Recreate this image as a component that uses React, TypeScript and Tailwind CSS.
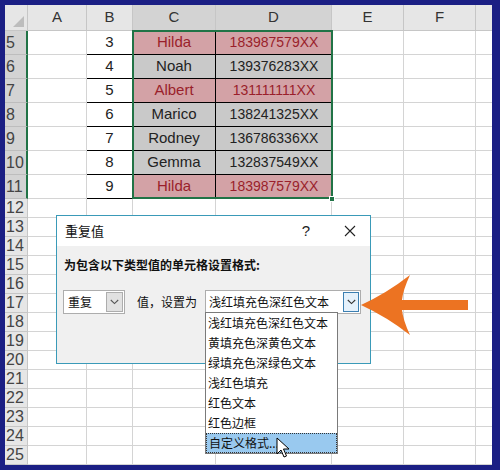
import React from "react";

const cols = [
  { key: "A", cls: "w-[59px]", sel: false },
  { key: "B", cls: "w-[46px]", sel: false },
  { key: "C", cls: "w-[83px]", sel: true },
  { key: "D", cls: "w-[116px]", sel: true },
  { key: "E", cls: "w-[72px]", sel: false },
  { key: "F", cls: "w-[72px]", sel: false },
];

const data = [
  { n: 5, b: "3", c: "Hilda", d: "183987579XX", red: true },
  { n: 6, b: "4", c: "Noah", d: "139376283XX", red: false },
  { n: 7, b: "5", c: "Albert", d: "131111111XX", red: true },
  { n: 8, b: "6", c: "Marico", d: "138241325XX", red: false },
  { n: 9, b: "7", c: "Rodney", d: "136786336XX", red: false },
  { n: 10, b: "8", c: "Gemma", d: "132837549XX", red: false },
  { n: 11, b: "9", c: "Hilda", d: "183987579XX", red: true },
];

const emptyRows = [12, 13, 14, 15, 16, 17, 18, 19, 20, 21, 22, 23, 24, 25];

const menuItems = [
  "浅红填充色深红色文本",
  "黄填充色深黄色文本",
  "绿填充色深绿色文本",
  "浅红色填充",
  "红色文本",
  "红色边框",
  "自定义格式...",
];

const cellFont = { fontFamily: '"Liberation Sans", "Noto Sans CJK SC", sans-serif' };
const cjk = { fontFamily: '"Noto Sans CJK SC", "Liberation Sans", sans-serif' };

function Chevron({ color = "#555" }: { color?: string }) {
  return (
    <svg width="9" height="6" viewBox="0 0 9 6">
      <path d="M0.8 1 L4.5 4.6 L8.2 1" fill="none" stroke={color} strokeWidth="1.1" />
    </svg>
  );
}

export default function App() {
  return (
    <div className="w-[500px] h-[470px] bg-[#1b1f84] pt-[5px] pl-[5px] pr-[8px] pb-[5px] overflow-hidden" style={cellFont}>
      <div className="relative w-[487px] h-[460px] bg-white overflow-hidden">
        {/* header row */}
        <div className="flex h-[26px]">
          <div className="relative w-[23px] h-full bg-[#e6e6e6] border-r border-b border-[#c6c6c6]">
            <svg className="absolute right-[3px] bottom-[3px]" width="11" height="11" viewBox="0 0 11 11">
              <path d="M11 0 L11 11 L0 11 Z" fill="#bdbdbd" />
            </svg>
          </div>
          {cols.map((c) => (
            <div
              key={c.key}
              className={`${c.cls} h-full flex items-center justify-center border-r border-b border-[#c6c6c6] text-[15px] text-[#333] ${c.sel ? "bg-[#d3d3d3]" : "bg-[#e6e6e6]"}`}
            >
              {c.key}
            </div>
          ))}
          <div className="flex-1 h-full bg-[#e6e6e6] border-b border-[#c6c6c6]" />
        </div>

        {/* data rows */}
        {data.map((r) => (
          <div key={r.n} className="flex h-[24px]">
            <div className="w-[23px] h-full bg-[#d3d3d3] border-r-2 border-r-[#217346] border-b border-b-[#bdbdbd] flex items-center pl-[1px] text-[16px] text-[#444]">
              {r.n}
            </div>
            <div className="w-[59px] h-full border-r border-b border-[#d4d4d4]" />
            <div className="w-[46px] h-full border-r border-b border-black flex items-center justify-center text-[15px] text-[#222]">
              {r.b}
            </div>
            <div
              className={`w-[83px] h-full border-r border-b border-black flex items-center justify-center text-[15px] ${r.red ? "bg-[#d3a2a6] text-[#9a1f2b]" : "bg-[#c9c9c9] text-[#222]"}`}
            >
              {r.c}
            </div>
            <div
              className={`w-[116px] h-full border-b border-black flex items-center justify-center text-[14px] ${r.red ? "bg-[#d3a2a6] text-[#9a1f2b]" : "bg-[#c9c9c9] text-[#222]"}`}
            >
              {r.d}
            </div>
            <div className="w-[72px] h-full border-r border-b border-[#d4d4d4]" />
            <div className="w-[72px] h-full border-r border-b border-[#d4d4d4]" />
            <div className="flex-1 h-full border-b border-[#d4d4d4]" />
          </div>
        ))}

        {/* empty rows */}
        {emptyRows.map((n) => (
          <div key={n} className="flex h-[19px]">
            <div className="w-[23px] h-full bg-[#e6e6e6] border-r border-r-[#c6c6c6] border-b border-b-[#c6c6c6] flex items-center pl-[1px] text-[16px] text-[#444]">
              {n}
            </div>
            <div className="w-[59px] h-full border-r border-b border-[#d4d4d4]" />
            <div className="w-[46px] h-full border-r border-b border-[#d4d4d4]" />
            <div className="w-[83px] h-full border-r border-b border-[#d4d4d4]" />
            <div className="w-[116px] h-full border-r border-b border-[#d4d4d4]" />
            <div className="w-[72px] h-full border-r border-b border-[#d4d4d4]" />
            <div className="w-[72px] h-full border-r border-b border-[#d4d4d4]" />
            <div className="flex-1 h-full border-b border-[#d4d4d4]" />
          </div>
        ))}

        {/* selection border */}
        <div className="absolute left-[127px] top-[25px] w-[201px] h-[169px] border-2 border-[#217346] pointer-events-none" />
        <div className="absolute left-[324px] top-[191px] w-[6px] h-[6px] bg-[#217346] border border-white" />

        {/* dialog */}
        <div className="absolute left-[51px] top-[210px] w-[315px] h-[149px] border border-[#3a9ab8] bg-[#f0f0f0] flex flex-col" style={cjk}>
          <div className="h-[30px] bg-white flex items-center pl-[8px] pr-[14px]">
            <span className="text-[13px] text-[#111]">重复值</span>
            <span className="ml-auto text-[15px] text-[#222] mr-[34px]" style={cellFont}>?</span>
            <svg width="12" height="12" viewBox="0 0 12 12">
              <path d="M1 1 L11 11 M11 1 L1 11" stroke="#222" strokeWidth="1.1" />
            </svg>
          </div>
          <div className="pl-[6px] pt-[10px]">
            <div className="pl-[1px] text-[12px] font-bold text-[#111] leading-[18px]">为包含以下类型值的单元格设置格式:</div>
            <div className="flex items-center mt-[16px] h-[24px]">
              <div className="w-[62px] h-[24px] bg-white border border-[#adadad] flex items-center">
                <span className="pl-[4px] text-[12px] text-[#111]">重复</span>
                <div className="ml-auto mr-[1px] w-[17px] h-[20px] bg-[#e1e1e1] border border-[#adadad] flex items-center justify-center">
                  <Chevron />
                </div>
              </div>
              <span className="ml-[12px] text-[12px] text-[#111] whitespace-nowrap">值，设置为</span>
              <div className="ml-[8px] w-[156px] h-[24px] bg-white border border-[#adadad] flex items-center">
                <span className="pl-[3px] text-[12px] text-[#111] whitespace-nowrap">浅红填充色深红色文本</span>
                <div className="ml-auto mr-[1px] w-[16px] h-[20px] bg-[#e5f1fb] border border-[#3c7fb1] flex items-center justify-center">
                  <Chevron color="#333" />
                </div>
              </div>
            </div>
          </div>
        </div>

        {/* dropdown list */}
        <div className="absolute left-[200px] top-[307px] w-[133px] bg-white border border-[#7a7a7a] flex flex-col" style={cjk}>
          {menuItems.map((m, i) => (
            <div
              key={m}
              className={`h-[20px] flex items-center pl-[2px] text-[12px] text-[#111] whitespace-nowrap ${i === menuItems.length - 1 ? "bg-[#99c9ef] border border-dotted border-[#333]" : ""}`}
            >
              {m}
            </div>
          ))}
        </div>

        {/* cursor */}
        <svg className="absolute left-[271px] top-[432px]" width="14" height="22" viewBox="0 0 14 22">
          <path d="M1 1 L1 17 L5 13 L8 20 L10.5 19 L7.5 12 L13 12 Z" fill="white" stroke="black" strokeWidth="1" strokeLinejoin="round" />
        </svg>

        {/* orange arrow */}
        <svg className="absolute left-[350px] top-[260px]" width="120" height="80" viewBox="0 0 120 80">
          <path
            d="M6 40 Q32 28 55 10 Q48 25 47 35 L113 35 L113 45 L47 45 Q48 55 55 70 Q32 52 6 40 Z"
            fill="#ec7322"
          />
        </svg>
      </div>
    </div>
  );
}
